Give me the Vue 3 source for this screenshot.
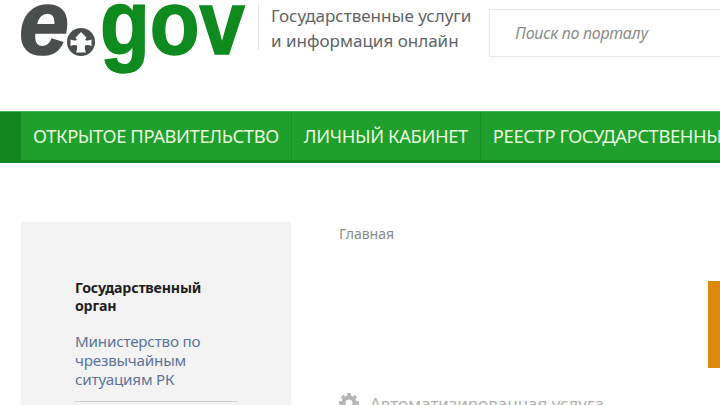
<template>
  <div class="page">
    <header class="top">
      <div class="logo">
        <span class="logo-e">e</span>
        <svg class="logo-mark" viewBox="0 0 28 28" width="28" height="28">
          <circle cx="14" cy="14" r="14" fill="#4a4f4d" />
          <path d="M14 4 L19.500 9.500 L18 12 C20 13 22 12.500 24.500 11.500 L24.500 18 C22 17 20 16.500 18 17.500 C17.500 20 18 22.500 19 24.500 L9 24.500 C10 22.500 10.500 20 10 17.500 C8 16.500 6 17 3.500 18 L3.500 11.500 C6 12.500 8 13 10 12 L8.500 9.500 Z" fill="#fff" />
        </svg>
        <span class="logo-gov">gov</span>
      </div>
      <div class="tagline">Государственные услуги<br />и информация онлайн</div>
      <div class="search">Поиск по порталу</div>
    </header>

    <nav class="nav">
      <div class="nav-edge"></div>
      <a v-for="item in menu" :key="item" class="nav-item">{{ item }}</a>
    </nav>

    <div class="content">
      <aside class="side">
        <div class="side-title">Государственный орган</div>
        <div class="side-link">Министерство по чрезвычайным ситуациям РК</div>
        <div class="side-line"></div>
      </aside>
      <main class="main">
        <div class="crumb">Главная</div>
        <div class="promo"></div>
        <div class="service">
          <svg class="gear" viewBox="0 0 20 20" width="20" height="20">
            <circle cx="10" cy="10" r="5.500" fill="none" stroke="#b4b4b4" stroke-width="4" />
            <path stroke="#b4b4b4" stroke-width="3.500" d="M10 0v4M10 16v4M0 10h4M16 10h4M3 3l2.800 2.800M14.200 14.200L17 17M3 17l2.800-2.800M14.200 5.800L17 3" />
          </svg>
          <span>Автоматизированная услуга</span>
        </div>
      </main>
    </div>
  </div>
</template>

<script setup>
const menu = ['ОТКРЫТОЕ ПРАВИТЕЛЬСТВО', 'ЛИЧНЫЙ КАБИНЕТ', 'РЕЕСТР ГОСУДАРСТВЕННЫХ УСЛУГ']
</script>

<style>
html, body {
  margin: 0;
  background: #fff;
}
</style>

<style scoped>
.page {
  width: 720px;
  height: 405px;
  overflow: hidden;
  font-family: "Noto Sans", "Open Sans", sans-serif;
  background: #fff;
}
.top {
  height: 111px;
  display: flex;
  align-items: flex-start;
  box-sizing: border-box;
  padding-left: 21px;
}
.logo {
  width: 237px;
  flex: none;
  height: 80px;
  display: flex;
  align-items: flex-start;
  font-family: "Liberation Sans", sans-serif;
  font-weight: 700;
}
.logo-e {
  font-size: 90px;
  line-height: 47px;
  color: #4a4f4d;
  font-style: italic;
  width: 48px;
  margin-left: -2px;
  -webkit-text-stroke: 1.500px #4a4f4d;
}
.logo-mark {
  margin-top: 28px;
  flex: none;
}
.logo-gov {
  margin-left: 5px;
  font-size: 90px;
  line-height: 47px;
  color: #0f8a1e;
  -webkit-text-stroke: 1.500px #0f8a1e;
  transform: scaleX(0.906);
  transform-origin: left top;
}
.tagline {
  margin-top: 3px;
  padding-left: 12px;
  border-left: 1px solid #e6e6e6;
  height: 47px;
  font-size: 17px;
  line-height: 25px;
  color: #5f6468;
  white-space: nowrap;
}
.search {
  margin: 9px 0 0 18px;
  width: 260px;
  height: 48px;
  flex: none;
  box-sizing: border-box;
  border: 1px solid #e8e8e8;
  padding-left: 25px;
  font-size: 16px;
  line-height: 46px;
  font-style: italic;
  color: #8d8d8d;
  letter-spacing: -0.3px;
  white-space: nowrap;
}
.nav {
  height: 52px;
  display: flex;
  background: #1fa02d;
  border-top: 1px solid #4cb657;
  border-bottom: 3px solid #138a22;
  box-sizing: border-box;
  white-space: nowrap;
}
.nav-edge {
  width: 21px;
  flex: none;
  background: #12871f;
}
.nav-item {
  padding: 0 12px;
  font-size: 18.400px;
  line-height: 47px;
  color: #e6f7dc;
  letter-spacing: -0.4px;
  border-right: 1px solid #178f25;
}
.content {
  display: flex;
  padding: 59px 0 0 21px;
}
.side {
  width: 270px;
  height: 200px;
  flex: none;
  box-sizing: border-box;
  background: #f3f3f3;
  padding: 57px 54px 0;
}
.side-title {
  font-size: 14.200px;
  line-height: 18px;
  font-weight: 700;
  color: #1e1e1e;
  letter-spacing: -0.2px;
}
.side-link {
  margin-top: 17px;
  font-size: 15.200px;
  line-height: 19px;
  color: #5d7399;
  letter-spacing: -0.2px;
}
.side-line {
  margin-top: 12px;
  height: 1px;
  background: #cfcfcf;
}
.main {
  padding-left: 48px;
  flex: 1;
  min-width: 0;
}
.crumb {
  margin-top: 3px;
  font-size: 14px;
  line-height: 18px;
  color: #8b8b8b;
}
.promo {
  margin: 38px 0 0 369px;
  width: 20px;
  height: 87px;
  background: #dd8a0c;
}
.service {
  margin-top: 25px;
  display: flex;
  align-items: flex-start;
  gap: 11px;
  font-size: 17px;
  line-height: 22px;
  color: #b0b0b0;
  white-space: nowrap;
}
.gear {
  flex: none;
}
</style>
